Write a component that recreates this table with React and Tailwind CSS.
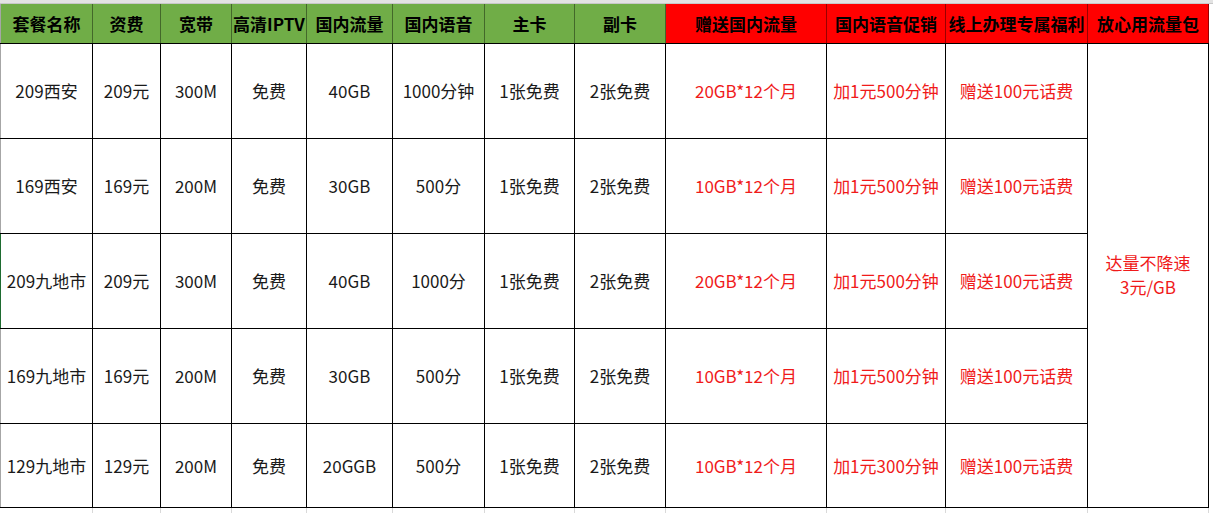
const cols = ['w-[92px]', 'w-[68px]', 'w-[71px]', 'w-[75px]', 'w-[86px]', 'w-[92px]', 'w-[90px]', 'w-[91px]', 'w-[161px]', 'w-[119px]', 'w-[142px]', 'w-[121px]']

const heads = [
  { label: '套餐名称', red: false },
  { label: '资费', red: false },
  { label: '宽带', red: false },
  { label: '高清IPTV', red: false },
  { label: '国内流量', red: false },
  { label: '国内语音', red: false },
  { label: '主卡', red: false },
  { label: '副卡', red: false },
  { label: '赠送国内流量', red: true },
  { label: '国内语音促销', red: true },
  { label: '线上办理专属福利', red: true },
  { label: '放心用流量包', red: true },
]

const rows = [
  ['209西安', '209元', '300M', '免费', '40GB', '1000分钟', '1张免费', '2张免费', '20GB*12个月', '加1元500分钟', '赠送100元话费'],
  ['169西安', '169元', '200M', '免费', '30GB', '500分', '1张免费', '2张免费', '10GB*12个月', '加1元500分钟', '赠送100元话费'],
  ['209九地市', '209元', '300M', '免费', '40GB', '1000分', '1张免费', '2张免费', '20GB*12个月', '加1元500分钟', '赠送100元话费'],
  ['169九地市', '169元', '200M', '免费', '30GB', '500分', '1张免费', '2张免费', '10GB*12个月', '加1元500分钟', '赠送100元话费'],
  ['129九地市', '129元', '200M', '免费', '20GGB', '500分', '1张免费', '2张免费', '10GB*12个月', '加1元300分钟', '赠送100元话费'],
]

const rowHeights = ['h-[95px]', 'h-[95px]', 'h-[95px]', 'h-[95px]', 'h-[84px]']

export default function App() {
  return (
    <div
      className="w-[1213px] h-[513px] bg-white overflow-hidden"
      style={{ fontFamily: "'Noto Sans CJK SC', 'Microsoft YaHei', sans-serif" }}
    >
      {/* 顶部灰色网格条 */}
      <div className="h-[4px] bg-[#e3e3e3] border-b border-[#c8c8c8]" />

      <table className="table-fixed border-collapse text-[17px] leading-none">
        <colgroup>
          {cols.map((c, i) => (
            <col key={i} className={c} />
          ))}
        </colgroup>
        <thead>
          <tr className="h-[39px]">
            {heads.map((h, i) => (
              <th
                key={i}
                className={`p-0 font-bold text-black whitespace-nowrap border-b border-b-black border-r border-r-black/40 ${h.red ? 'bg-[#ff0000]' : 'bg-[#70ad47]'} ${i === 0 ? 'border-l border-l-[#a6a6a6]' : ''} ${i === 11 ? 'border-r-black' : ''}`}
              >
                {h.label}
              </th>
            ))}
          </tr>
        </thead>
        <tbody>
          {rows.map((r, ri) => (
            <tr key={ri} className={rowHeights[ri]}>
              {r.map((v, ci) => (
                <td
                  key={ci}
                  className={`p-0 text-center whitespace-nowrap border border-black ${ci >= 8 ? 'text-[#f01a1a]' : 'text-[#1a1a1a]'} ${ci === 0 ? (ri === 2 ? 'border-l-[#1e6b30]' : 'border-l-[#a6a6a6]') : ''}`}
                >
                  {v}
                </td>
              ))}
              {ri === 0 && (
                <td rowSpan={5} className="p-0 text-center border border-black text-[#f01a1a] leading-[24px]">
                  <div>达量不降速</div>
                  <div>3元/GB</div>
                </td>
              )}
            </tr>
          ))}
          <tr className="h-[6px]">
            {cols.map((c, i) => (
              <td key={i} className="p-0 border-r border-[#d9d9d9]" />
            ))}
          </tr>
        </tbody>
      </table>
    </div>
  )
}
